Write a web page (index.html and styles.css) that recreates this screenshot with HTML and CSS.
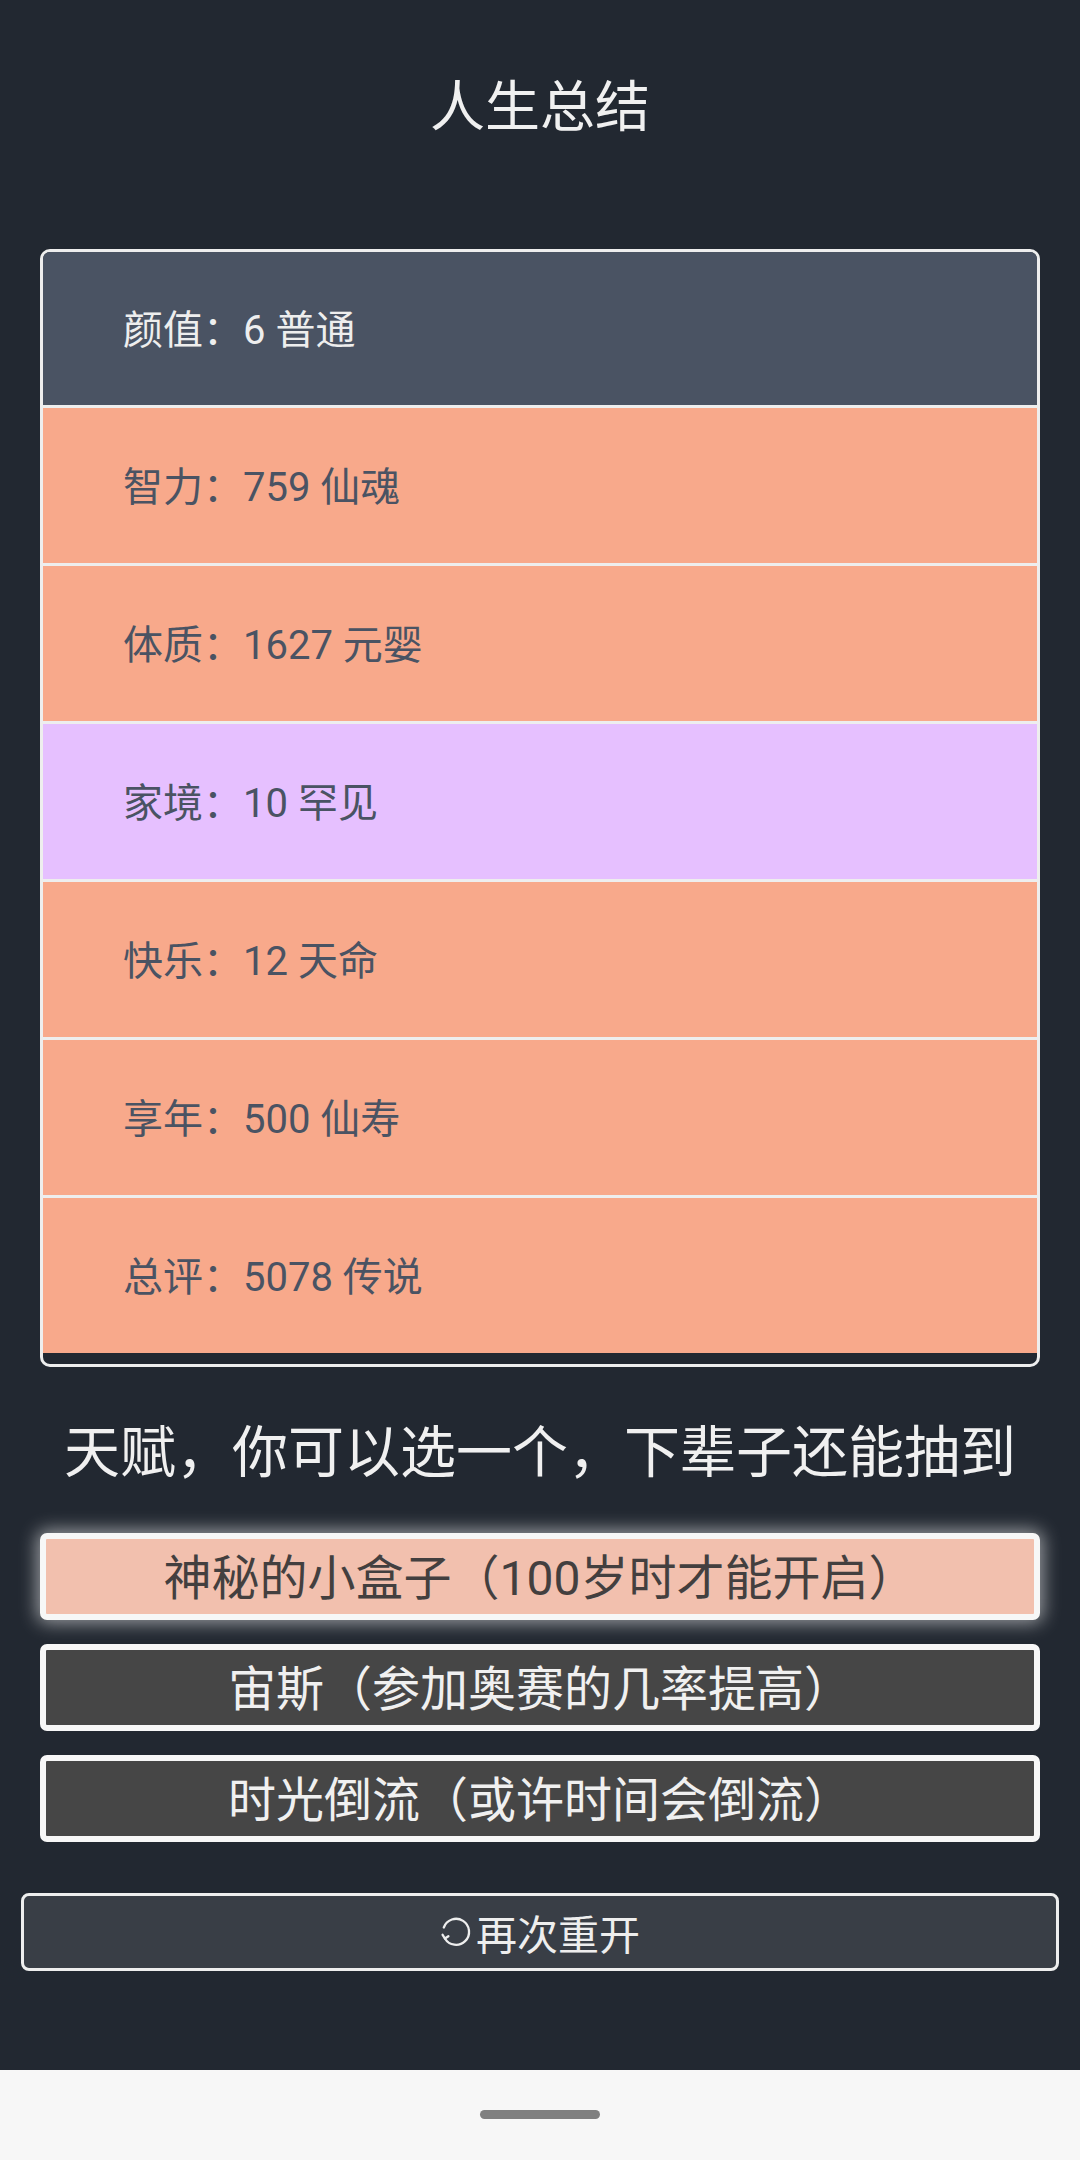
FILE: index.html
```html
<!DOCTYPE html>
<html lang="zh-CN">
<head>
<meta charset="utf-8" />
<title>人生总结</title>
<link rel="stylesheet" href="styles.css">
</head>
<body>
<div class="page">
  <div class="main">
    <h1 class="title">人生总结</h1>
    <ul class="summary">
      <li class="grade0">颜值：6 普通</li>
      <li class="grade3">智力：759 仙魂</li>
      <li class="grade3">体质：1627 元婴</li>
      <li class="grade2">家境：10 罕见</li>
      <li class="grade3">快乐：12 天命</li>
      <li class="grade3">享年：500 仙寿</li>
      <li class="grade3">总评：5078 传说</li>
    </ul>
    <div class="talent-head">天赋，你可以选一个，下辈子还能抽到</div>
    <ul class="talents">
      <li class="selected">神秘的小盒子（100岁时才能开启）</li>
      <li>宙斯（参加奥赛的几率提高）</li>
      <li>时光倒流（或许时间会倒流）</li>
    </ul>
    <button class="restart"><svg class="icon" viewBox="0 0 32 32" width="32" height="32"><path d="M3.8 11.5 A13 13 0 1 1 4.9 22.5" fill="none" stroke="#eee" stroke-width="2.3" stroke-linecap="round"/><path d="M2.6 18.8 L4.9 22.5 L8.4 20.2" fill="none" stroke="#eee" stroke-width="2.3" stroke-linecap="round" stroke-linejoin="round"/></svg>再次重开</button>
  </div>
  <div class="navbar"><span class="pill"></span></div>
</div>
</body>
</html>
```

FILE: styles.css
```css
*{margin:0;padding:0;box-sizing:border-box;}
ul,li{list-style:none;}
html,body{width:1080px;height:2160px;}
body{background:#222831;font-family:Roboto,"Noto Sans CJK SC",sans-serif;color:#eee;}
.page{height:2160px;display:flex;flex-direction:column;}
.main{flex:1;display:flex;flex-direction:column;}
.title{font-weight:normal;font-size:55px;line-height:82px;text-align:center;padding-top:66px;color:#f0f0f0;}
.summary{margin:101px 40px 0;border:3px solid #eee;border-radius:10px;overflow:hidden;padding-bottom:11px;}
.summary li{height:158px;display:flex;align-items:center;padding-left:80px;padding-bottom:4px;font-size:40px;color:#4a5363;}
.summary li:first-child{height:153px;}
.summary li+li{border-top:3px solid #eee;}
.summary .grade0{background:#4a5363;color:#eee;}
.summary .grade2{background:#e6c0ff;}
.summary .grade3{background:#f8a98b;}
.talent-head{font-size:56px;line-height:82px;text-align:center;margin-top:45px;color:#f0f0f0;}
.talents{margin:39px 40px 0;display:flex;flex-direction:column;gap:24px;}
.talents li{height:87px;border:6px solid #f7f7f7;border-radius:7px;background:#464646;color:#f0f0f0;font-size:48px;padding-bottom:6px;display:flex;align-items:center;justify-content:center;}
.talents li.selected{background:#f2c0ae;color:#433f3f;box-shadow:0 0 18px 3px rgba(255,255,255,.55);}
.restart{margin:51px 21px 0;height:78px;border:3px solid #eee;border-radius:8px;background:#393e46;color:#eee;font-family:Roboto,"Noto Sans CJK SC",sans-serif;font-size:41px;display:flex;align-items:center;justify-content:center;}
.restart .icon{width:32px;height:32px;margin-right:4px;}
.navbar{height:90px;background:#f7f7f7;display:flex;justify-content:center;align-items:center;}
.pill{width:120px;height:9px;border-radius:5px;background:#808080;margin-top:-2px;}
```
